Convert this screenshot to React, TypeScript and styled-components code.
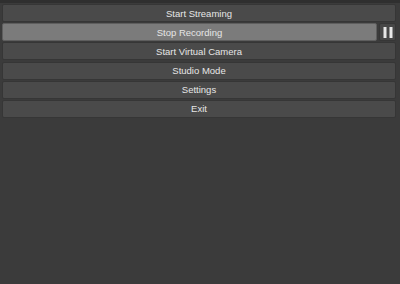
import React from 'react';
import styled, { createGlobalStyle } from 'styled-components';

const GlobalStyle = createGlobalStyle`
  html, body {
    margin: 0;
    padding: 0;
    background: #3b3b3b;
  }
  body {
    font-family: "Liberation Sans", Arial, sans-serif;
  }
`;

interface ControlButton {
  label: string;
  active?: boolean;
  paused?: boolean;
}

const buttons: ControlButton[] = [
  {label: 'Start Streaming'},
  {label: 'Stop Recording', active: true, paused: true},
  {label: 'Start Virtual Camera'},
  {label: 'Studio Mode'},
  {label: 'Settings'},
  {label: 'Exit'},
];

const PauseIcon: React.FC = () => (
  <svg width="10" height="11" viewBox="0 0 10 11">
    <rect x="0.5" y="0" width="3" height="11" fill="#e8e8e8"/>
    <rect x="6.5" y="0" width="3" height="11" fill="#e8e8e8"/>
  </svg>
);

export default function App() {
  return (
    <Root>
      <GlobalStyle/>
      <Controls>
        {buttons.map((b) => (
          <Row key={b.label}>
            <Button $active={b.active}>{b.label}</Button>
            {b.paused && (
              <PauseButton>
                <PauseIcon/>
              </PauseButton>
            )}
          </Row>
        ))}
      </Controls>
    </Root>
  );
}

const Root = styled.div`
  width: 400px;
  height: 284px;
  background: #3b3b3b;
  border-top: 3px solid #2f2f2f;
  box-sizing: border-box;
`;

const Controls = styled.div`
  display: flex;
  flex-direction: column;
  gap: 1.2px;
  padding: 1px 4px 0 2px;
`;

const Row = styled.div`
  display: flex;
  gap: 2px;
  height: 18px;
`;

const Button = styled.div<{ $active?: boolean }>`
  flex: 1;
  display: flex;
  align-items: center;
  justify-content: center;
  box-sizing: border-box;
  border-radius: 2px;
  border: 1px solid ${p => p.$active ? '#5e5e5e' : '#363636'};
  background: ${p => p.$active ? '#7b7b7b' : '#4a4a4a'};
  color: #e6e6e6;
  font-size: 9.5px;
`;

const PauseButton = styled.div`
  width: 17px;
  display: flex;
  align-items: center;
  justify-content: center;
  box-sizing: border-box;
  border-radius: 2px;
  border: 1px solid #363636;
  background: #474747;
`;
